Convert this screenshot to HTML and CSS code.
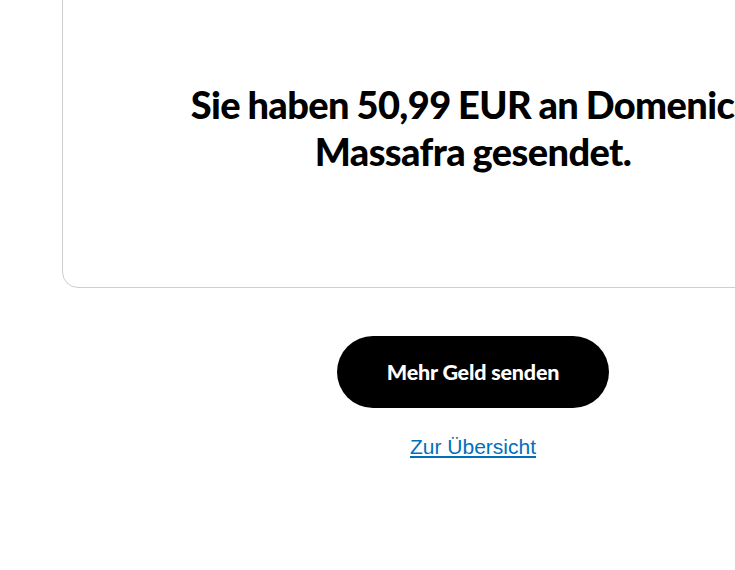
FILE: index.html
```html
<!DOCTYPE html>
<html lang="de">
<head>
    <meta charset="UTF-8">
    <meta name="viewport" content="width=device-width, initial-scale=1.0">
    <title>Zahlung gesendet</title>
    <link rel="stylesheet" href="styles.css">
</head>
<body>
    <main class="page">
        <section class="card">
            <h1 class="card-title">Sie haben 50,99 EUR an Domenico Massafra gesendet.</h1>
        </section>
        <div class="actions">
            <button type="button" class="btn-primary">Mehr Geld senden</button>
            <a href="#" class="link-overview">Zur Übersicht</a>
        </div>
    </main>
</body>
</html>
```

FILE: styles.css
```css
html, body {
    overflow: hidden;
}
body {
    margin: 0;
    background: #fff;
    color: #000;
    font-family: "Lato", "Liberation Sans", sans-serif;
}
.page {
    width: 946px;
}
.card {
    margin: -60px 62px 0;
    padding: 140px 24px 112px;
    border: 1px solid #cfcfcf;
    border-radius: 16px;
}
.card-title {
    max-width: 600px;
    margin: 0 auto;
    font-size: 38px;
    font-weight: 900;
    line-height: 47px;
    text-align: center;
    letter-spacing: -0.6px;
    word-spacing: -1px;
}
.actions {
    display: flex;
    flex-direction: column;
    align-items: center;
    padding-top: 48px;
}
.btn-primary {
    width: 272px;
    height: 72px;
    border: none;
    border-radius: 36px;
    background: #000;
    color: #fff;
    font-family: "Lato", sans-serif;
    font-size: 21.5px;
    font-weight: 900;
    letter-spacing: -0.2px;
    cursor: pointer;
}
.link-overview {
    margin-top: 27px;
    color: #0070ba;
    font-family: "Liberation Sans", Arial, sans-serif;
    font-size: 21px;
    text-decoration: underline;
}
```
